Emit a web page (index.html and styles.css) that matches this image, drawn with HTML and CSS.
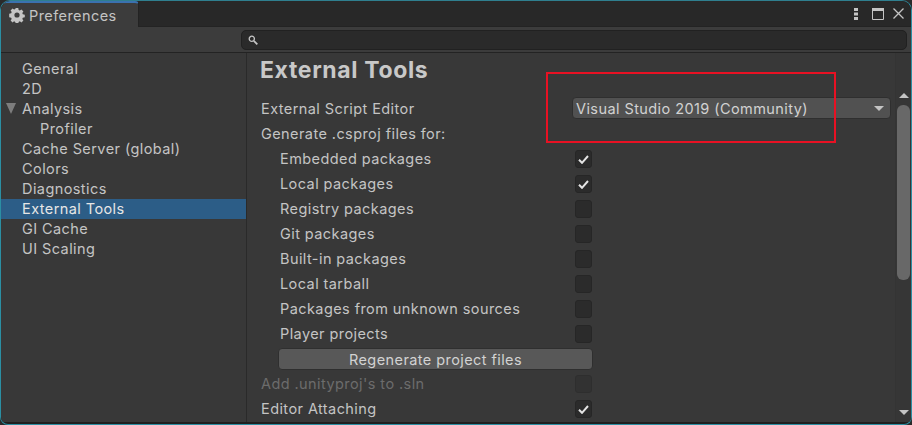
FILE: index.html
```html
<!DOCTYPE html>
<html lang="en">
<head>
  <meta charset="UTF-8">
  <title>Preferences</title>
  <link rel="stylesheet" href="styles.css">
</head>
<body>
  <div class="window">
    <div class="tabbar">
      <div class="tab">
        <svg class="gear" width="16" height="16" viewBox="0 0 16 16">
          <path fill="#c4c4c4" fill-rule="evenodd" d="M6.7 1h2.6l.3 2 1.2.6 1.7-1.1 1.9 1.9-1.1 1.7.5 1.2 2 .4v2.6l-2 .4-.5 1.2 1.1 1.7-1.9 1.8-1.7-1.1-1.2.6-.3 2H6.7l-.4-2-1.2-.6-1.6 1.1-1.9-1.8 1.1-1.7-.5-1.2-2-.4V6.7l2-.4.5-1.2-1.1-1.7 1.9-1.9 1.6 1.1 1.2-.6zM8 5.4a2.6 2.6 0 1 0 0 5.2 2.6 2.6 0 0 0 0-5.2z"/>
        </svg>
        <span>Preferences</span>
      </div>
      <div class="win-buttons">
        <svg class="btn-dots" width="4" height="12" viewBox="0 0 4 12"><path fill="#c4c4c4" d="M0 0h4v3H0zM0 4.500h4v3H0zM0 9h4v3H0z"/></svg>
        <svg class="btn-max" width="12" height="12" viewBox="0 0 12 12"><path fill="none" stroke="#c4c4c4" d="M.5 2.500h11v9H.5z"/><path fill="#c4c4c4" d="M0 0h12v3H0z"/></svg>
        <svg class="btn-close" width="11" height="11" viewBox="0 0 11 11"><path fill="none" stroke="#c4c4c4" stroke-width="1.3" d="M.5.5l10 10M10.500.5l-10 10"/></svg>
      </div>
    </div>

    <div class="toolbar">
      <div class="search">
        <svg width="10" height="10" viewBox="0 0 10 10"><circle cx="3.8" cy="3.8" r="2.6" fill="none" stroke="#c4c4c4" stroke-width="1.3"/><path stroke="#c4c4c4" stroke-width="1.8" d="M5.8 5.8L9.3 9.3"/></svg>
      </div>
    </div>

    <div class="main">
      <ul class="sidebar">
        <li>General</li>
        <li>2D</li>
        <li class="foldout">Analysis</li>
        <li class="child">Profiler</li>
        <li>Cache Server (global)</li>
        <li>Colors</li>
        <li>Diagnostics</li>
        <li class="selected">External Tools</li>
        <li>GI Cache</li>
        <li>UI Scaling</li>
      </ul>

      <div class="content">
        <div class="settings">
          <h1>External Tools</h1>
          <div class="row">
            <span class="label">External Script Editor</span>
            <div class="dropdown">
              <span>Visual Studio 2019 (Community)</span>
              <i class="arrow-down"></i>
            </div>
          </div>
          <div class="row"><span class="label">Generate .csproj files for:</span></div>
          <div class="row sub"><span class="label">Embedded packages</span><span class="check on"><svg width="11" height="9" viewBox="0 0 11 9"><path fill="none" stroke="#e4e4e4" stroke-width="2" d="M1 4.800l3 3L10 1"/></svg></span></div>
          <div class="row sub"><span class="label">Local packages</span><span class="check on"><svg width="11" height="9" viewBox="0 0 11 9"><path fill="none" stroke="#e4e4e4" stroke-width="2" d="M1 4.800l3 3L10 1"/></svg></span></div>
          <div class="row sub"><span class="label">Registry packages</span><span class="check"></span></div>
          <div class="row sub"><span class="label">Git packages</span><span class="check"></span></div>
          <div class="row sub"><span class="label">Built-in packages</span><span class="check"></span></div>
          <div class="row sub"><span class="label">Local tarball</span><span class="check"></span></div>
          <div class="row sub"><span class="label">Packages from unknown sources</span><span class="check"></span></div>
          <div class="row sub"><span class="label">Player projects</span><span class="check"></span></div>
          <button class="regen">Regenerate project files</button>
          <div class="row disabled"><span class="label">Add .unityproj's to .sln</span><span class="check"></span></div>
          <div class="row"><span class="label">Editor Attaching</span><span class="check on"><svg width="11" height="9" viewBox="0 0 11 9"><path fill="none" stroke="#e4e4e4" stroke-width="2" d="M1 4.800l3 3L10 1"/></svg></span></div>
        </div>

        <div class="scrollbar">
          <i class="arrow-up"></i>
          <div class="thumb"></div>
          <i class="arrow-down"></i>
        </div>
      </div>
    </div>

    <div class="redbox"></div>
  </div>
</body>
</html>
```

FILE: styles.css
```css
* {
  box-sizing: border-box;
}

html, body {
  margin: 0;
  height: 100%;
}

body {
  font-family: Inter, "Liberation Sans", sans-serif;
  font-size: 14.5px;
  letter-spacing: 0.42px;
  color: #c4c4c4;
  background: #2a2a2a;
  overflow: hidden;
}

.window {
  position: relative;
  display: flex;
  flex-direction: column;
  height: 425px;
  border: 1px solid #2b8fa3;
  border-radius: 10px 10px 8px 8px;
  border-top-color: #2f7f8f;
  background: #1f1f1f;
  overflow: hidden;
}

.tabbar {
  display: flex;
  justify-content: space-between;
  height: 26px;
  background: #282828;
  border-bottom: 1px solid #232323;
}

.tab {
  display: flex;
  align-items: center;
  gap: 4px;
  width: 138px;
  height: 26px;
  padding-left: 8px;
  background: #3c3c3c;
  border-top: 2px solid #3a72b0;
  border-radius: 6px 4px 0 0;
  border-right: 1px solid #232323;
}

.gear {
  flex: none;
}

.win-buttons {
  display: flex;
  align-items: center;
  padding-right: 7px;
}

.btn-dots {
  margin-right: 14px;
}

.btn-max {
  margin-right: 9px;
}

.toolbar {
  display: flex;
  justify-content: flex-end;
  align-items: center;
  height: 26px;
  padding-right: 4px;
  background: #3c3c3c;
  border-bottom: 1px solid #232323;
}

.search {
  display: flex;
  align-items: center;
  width: 666px;
  height: 20px;
  padding-left: 6px;
  background: #2a2a2a;
  border: 1px solid #212121;
  border-radius: 5px;
}

.main {
  display: flex;
  height: 369px;
  background: #383838;
}

.sidebar {
  flex: none;
  width: 245px;
  margin: 0;
  padding: 6px 0 0;
  list-style: none;
  border-right: 1px solid #2a2a2a;
  box-sizing: content-box;
}

.sidebar li {
  position: relative;
  height: 20px;
  padding-left: 21px;
  line-height: 20px;
}

.sidebar .child {
  padding-left: 39px;
}

.sidebar .selected {
  background: #2c5d87;
  color: #e6e6e6;
}

.foldout::before {
  content: "";
  position: absolute;
  left: 5px;
  top: 4px;
  border-style: solid;
  border-width: 11px 5.5px 0;
  border-color: #7d7d7d transparent transparent;
}

.content {
  flex: 1;
  display: flex;
  min-width: 0;
}

.settings {
  flex: 1;
  min-width: 0;
  padding-left: 14px;
}

h1 {
  margin: 0 0 0 -1px;
  height: 43px;
  font-size: 23px;
  font-weight: 700;
  letter-spacing: 0.65px;
  line-height: 34px;
  color: #c8c8c8;
}

.row {
  position: relative;
  display: flex;
  align-items: center;
  height: 25px;
}

.sub .label {
  padding-left: 19px;
}

.disabled {
  color: #6c6c6c;
}

.disabled .check {
  background: #323232;
  border-color: #2e2e2e;
}

.dropdown {
  position: absolute;
  left: 311px;
  top: 1px;
  display: flex;
  align-items: center;
  justify-content: space-between;
  width: 319px;
  height: 22px;
  padding: 0 4px 0 3px;
  background: #515151;
  border: 1px solid #2f2f2f;
  border-radius: 4px;
  color: #d2d2d2;
}

.dropdown .arrow-down {
  margin-right: 2px;
}

.arrow-down, .arrow-up {
  display: block;
  width: 0;
  height: 0;
  border-style: solid;
  border-color: transparent;
}

.arrow-down {
  border-width: 5px 5px 0;
  border-top-color: #c4c4c4;
}

.arrow-up {
  border-width: 0 5px 5px;
  border-bottom-color: #c4c4c4;
}

.check {
  position: absolute;
  left: 314px;
  top: 4px;
  display: flex;
  align-items: center;
  justify-content: center;
  width: 17px;
  height: 18px;
  background: #2b2b2b;
  border: 1px solid #262626;
  border-radius: 3px;
}

.regen {
  display: block;
  width: 315px;
  height: 22px;
  margin: 2px 0 1px 17px;
  padding: 0;
  background: #585858;
  border: 1px solid #2f2f2f;
  border-radius: 4px;
  color: #d2d2d2;
  font: inherit;
  letter-spacing: inherit;
}

.scrollbar {
  flex: none;
  position: relative;
  display: flex;
  flex-direction: column;
  align-items: center;
  justify-content: space-between;
  width: 16px;
  padding: 40px 0 7px;
  border-left: 1px solid #343434;
  background: #363636;
}

.thumb {
  position: absolute;
  left: 1px;
  top: 52px;
  width: 13px;
  height: 175px;
  background: #686868;
  border-radius: 6px;
}

.redbox {
  position: absolute;
  left: 545px;
  top: 71px;
  width: 290px;
  height: 71px;
  border: 2px solid #e81123;
  pointer-events: none;
}
```
